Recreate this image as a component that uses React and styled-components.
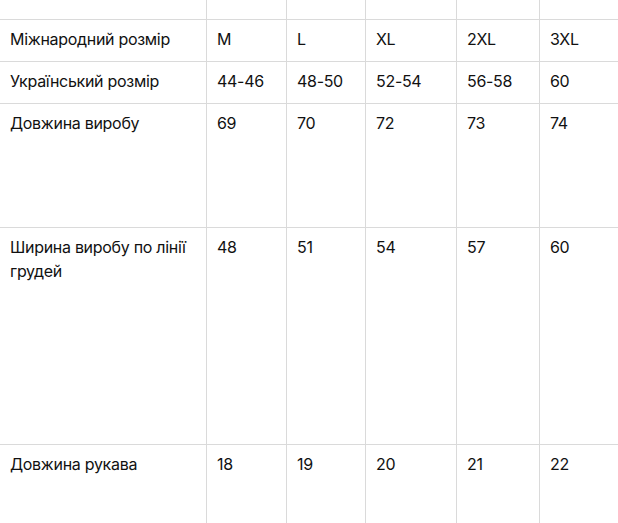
import React from "react"
import styled, { createGlobalStyle } from "styled-components"

const GlobalStyle = createGlobalStyle`
    html, body {
        margin: 0;
        padding: 0;
        background: #fff;
        overflow: hidden;
    }
    body {
        font-family: Inter, "Noto Sans", sans-serif;
        color: #111;
    }
`

const rows = [
    { label: "", values: ["", "", "", "", ""], height: 19 },
    { label: "Міжнародний розмір", values: ["M", "L", "XL", "2XL", "3XL"], height: 41 },
    { label: "Український розмір", values: ["44-46", "48-50", "52-54", "56-58", "60"], height: 41 },
    { label: "Довжина виробу", values: ["69", "70", "72", "73", "74"], height: 123 },
    { label: "Ширина виробу по лінії грудей", values: ["48", "51", "54", "57", "60"], height: 216 },
    { label: "Довжина рукава", values: ["18", "19", "20", "21", "22"], height: 78 },
]

const App = () => {
    return (
        <>
            <GlobalStyle />
            <SizeTable $rows={rows.map(r => r.height + "px").join(" ")}>
                {rows.map((row, i) => (
                    <React.Fragment key={i}>
                        <Cell>{row.label}</Cell>
                        {row.values.map((v, j) => (
                            <Cell key={j}>{v}</Cell>
                        ))}
                    </React.Fragment>
                ))}
            </SizeTable>
        </>
    )
}

export default App

const SizeTable = styled.div`
    display: grid;
    grid-template-columns: 206px 79px 78px 90px 82px 1fr;
    grid-template-rows: ${props => props.$rows};
    gap: 1px;
    background-color: #dadada;
    width: 640px;
`

const Cell = styled.div`
    background-color: #fff;
    padding: 7px 10px;
    font-size: 16px;
    line-height: 24px;
    letter-spacing: -0.3px;
    overflow: hidden;
`
